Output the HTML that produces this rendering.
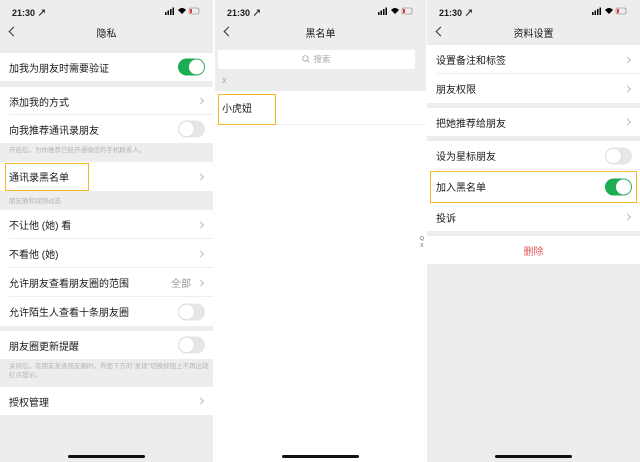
<!DOCTYPE html>
<html><head><meta charset="utf-8"><style>
*{margin:0;padding:0;box-sizing:border-box}
body{width:640px;height:462px;background:#fff;font-family:"Liberation Sans","Noto Sans CJK SC",sans-serif;position:relative;overflow:hidden;color:#1a1a1a}
.p{position:absolute;top:0;height:462px;width:213px;background:#ededed}
.abs{position:absolute}
.time{position:absolute;left:12px;top:6px;font-size:9px;font-weight:bold}
.st{position:absolute;right:12px;top:7px;width:36px;height:8px}
.title{position:absolute;top:25px;left:0;width:100%;text-align:center;font-size:10px}
.back{position:absolute;left:10px;top:28px;width:7px;height:7px;border-left:1.3px solid #333;border-bottom:1.3px solid #333;transform:rotate(45deg)}
.row{position:absolute;left:0;width:100%;background:#fff;font-size:10px;padding-left:9px;display:flex;align-items:center}
.row.b::after{content:"";position:absolute;left:9px;right:0;bottom:0;height:1px;background:#eee}
.chev{position:absolute;right:10px;top:50%;width:5px;height:5px;border-right:1px solid #bbb;border-top:1px solid #bbb;transform:translateY(-50%) rotate(45deg)}
.tg{position:absolute;right:8px;top:50%;transform:translateY(-50%);width:27px;height:17px;border-radius:9px;background:#e6e6e6}
.tg::after{content:"";position:absolute;left:1px;top:1px;width:15px;height:15px;border-radius:50%;background:#fff;box-shadow:0 0 1px #aaa}
.tg.on{background:#1aad52}
.tg.on::after{left:11px}
.hint{position:absolute;left:9px;font-size:6.5px;color:#b5b5b5;line-height:9px}
.yb{position:absolute;border:1.5px solid #f5b821}
.home{position:absolute;top:455px;width:77px;height:3px;border-radius:2px;background:#111}
</style></head><body>

<!-- Panel 1 -->
<div class="p" style="left:0">
 <div class="time">21:30 ↗</div>
 <svg class="st" viewBox="0 0 36 8"><rect x="0" y="5" width="1.5" height="3"/><rect x="2.5" y="3.5" width="1.5" height="4.5"/><rect x="5" y="2" width="1.5" height="6"/><rect x="7.5" y="0.5" width="1.5" height="7.5"/><path d="M13 3 Q17 -1 21 3 L17 7Z"/><rect x="24" y="1" width="10" height="6" rx="1.5" fill="none" stroke="#999" stroke-width="0.8"/><rect x="25" y="2" width="2" height="4" fill="#e33"/></svg>
 <div class="back"></div><div class="title">隐私</div>
 <div class="row" style="top:53px;height:28px">加我为朋友时需要验证<div class="tg on"></div></div>
 <div class="row b" style="top:87px;height:28px">添加我的方式<div class="chev"></div></div>
 <div class="row" style="top:115px;height:28px">向我推荐通讯录朋友<div class="tg"></div></div>
 <div class="hint" style="top:146px">开启后，为你推荐已经开通微信的手机联系人。</div>
 <div class="row" style="top:162px;height:29px">通讯录黑名单<div class="chev"></div></div>
 <div class="yb" style="left:5px;top:163px;width:84px;height:28px"></div>
 <div class="hint" style="top:197px">朋友圈和视频动态</div>
 <div class="row b" style="top:210px;height:29px">不让他 (她) 看<div class="chev"></div></div>
 <div class="row b" style="top:239px;height:29px">不看他 (她)<div class="chev"></div></div>
 <div class="row b" style="top:268px;height:29px">允许朋友查看朋友圈的范围<span style="position:absolute;right:22px;color:#999">全部</span><div class="chev"></div></div>
 <div class="row" style="top:297px;height:29px">允许陌生人查看十条朋友圈<div class="tg"></div></div>
 <div class="row" style="top:331px;height:28px">朋友圈更新提醒<div class="tg"></div></div>
 <div class="hint" style="top:362px;width:200px">关闭后，有朋友发表朋友圈时，界面下方的"发现"切换按钮上不再出现红点提示。</div>
 <div class="row" style="top:387px;height:28px">授权管理<div class="chev"></div></div>
 <div class="home" style="left:68px"></div>
</div>

<!-- Panel 2 -->
<div class="p" style="left:215px;width:211px">
 <div class="time">21:30 ↗</div>
 <svg class="st" viewBox="0 0 36 8"><rect x="0" y="5" width="1.5" height="3"/><rect x="2.5" y="3.5" width="1.5" height="4.5"/><rect x="5" y="2" width="1.5" height="6"/><rect x="7.5" y="0.5" width="1.5" height="7.5"/><path d="M13 3 Q17 -1 21 3 L17 7Z"/><rect x="24" y="1" width="10" height="6" rx="1.5" fill="none" stroke="#999" stroke-width="0.8"/><rect x="25" y="2" width="2" height="4" fill="#e33"/></svg>
 <div class="back"></div><div class="title">黑名单</div>
 <div class="abs" style="left:3px;top:50px;width:197px;height:19px;background:#fff;border-radius:2px;text-align:center;font-size:8.5px;color:#aaa;line-height:19px"><svg width="8" height="8" viewBox="0 0 8 8" style="vertical-align:-1px;margin-right:3px"><circle cx="3.4" cy="3.4" r="2.7" fill="none" stroke="#aaa" stroke-width="0.9"/><path d="M5.4 5.4L7.5 7.5" stroke="#aaa" stroke-width="0.9"/></svg>搜索</div>
 <div class="abs" style="left:7px;top:78px;font-size:7px;color:#999">X</div>
 <div class="abs" style="left:0;top:91px;width:211px;height:371px;background:#fff"></div>
 <div class="abs" style="left:7px;top:100px;font-size:10px">小虎妞</div>
 <div class="abs" style="left:0;top:124px;width:211px;height:1px;background:#eee"></div>
 <div class="yb" style="left:3px;top:94px;width:58px;height:31px"></div>
 <div class="abs" style="left:205px;top:236px;font-size:5px;color:#555;line-height:7px;text-align:center">Q<br>X</div>
 <div class="home" style="left:67px"></div>
</div>

<!-- Panel 3 -->
<div class="p" style="left:427px">
 <div class="time">21:30 ↗</div>
 <svg class="st" viewBox="0 0 36 8"><rect x="0" y="5" width="1.5" height="3"/><rect x="2.5" y="3.5" width="1.5" height="4.5"/><rect x="5" y="2" width="1.5" height="6"/><rect x="7.5" y="0.5" width="1.5" height="7.5"/><path d="M13 3 Q17 -1 21 3 L17 7Z"/><rect x="24" y="1" width="10" height="6" rx="1.5" fill="none" stroke="#999" stroke-width="0.8"/><rect x="25" y="2" width="2" height="4" fill="#e33"/></svg>
 <div class="back"></div><div class="title">资料设置</div>
 <div class="row b" style="top:45px;height:29px">设置备注和标签<div class="chev"></div></div>
 <div class="row" style="top:74px;height:29px">朋友权限<div class="chev"></div></div>
 <div class="row" style="top:108px;height:28px">把她推荐给朋友<div class="chev"></div></div>
 <div class="row b" style="top:141px;height:29px">设为星标朋友<div class="tg"></div></div>
 <div class="row b" style="top:170px;height:33px">加入黑名单<div class="tg on"></div></div>
 <div class="yb" style="left:3px;top:171px;width:207px;height:32px"></div>
 <div class="row" style="top:203px;height:28px">投诉<div class="chev"></div></div>
 <div class="row" style="top:236px;height:28px;justify-content:center;padding:0;color:#e05a5a">删除</div>
 <div class="home" style="left:68px"></div>
</div>
</body></html>
